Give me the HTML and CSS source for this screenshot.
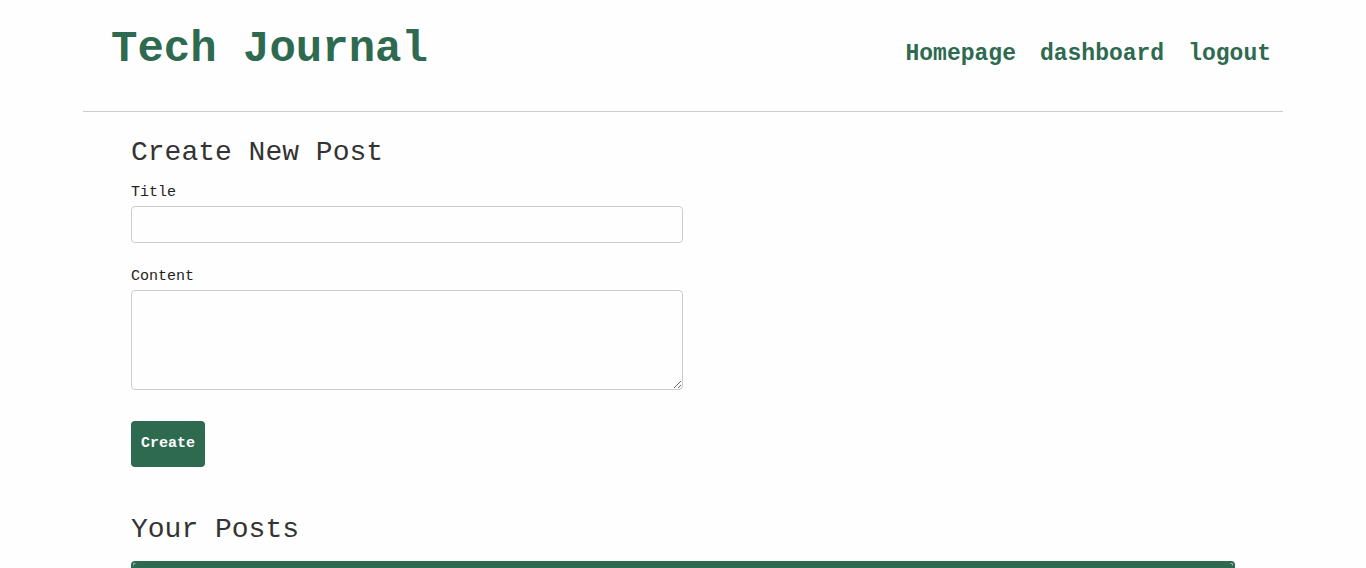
FILE: index.html
```html
<!DOCTYPE html>
<html lang="en">
<head>
  <meta charset="utf-8">
  <meta name="viewport" content="width=device-width, initial-scale=1">
  <title>Tech Journal</title>
  <link rel="stylesheet" href="styles.css">
</head>
<body>
  <div class="wrapper">
    <header class="site-header">
      <h1 class="brand">Tech Journal</h1>
      <nav class="site-nav">
        <a href="#">Homepage</a>
        <a href="#">dashboard</a>
        <a href="#">logout</a>
      </nav>
    </header>
    <main class="content">
      <h2 class="section-title">Create New Post</h2>
      <form class="post-form">
        <div class="field">
          <label for="post-title">Title</label>
          <input class="control" type="text" id="post-title" name="title">
        </div>
        <div class="field">
          <label for="post-content">Content</label>
          <textarea class="control control-area" id="post-content" name="content"></textarea>
        </div>
        <button class="create-button" type="submit">Create</button>
      </form>
      <h2 class="section-title">Your Posts</h2>
      <article class="post-card">
        <div class="post-card-header"></div>
      </article>
    </main>
  </div>
</body>
</html>
```
FILE: styles.css
```css
* {
  box-sizing: border-box;
}

body {
  margin: 0;
  height: 100vh;
  overflow: hidden;
  background: #fefefe;
  color: #333;
  font-family: "Liberation Mono", "Courier New", monospace;
  font-size: 15px;
}

.wrapper {
  max-width: 1200px;
  margin: 0 auto;
}

.site-header {
  display: flex;
  justify-content: space-between;
  align-items: flex-start;
  padding: 22px 12px 34px 28px;
  border-bottom: 1px solid #ccc;
  color: #2d6a4f;
}

.brand {
  margin: 0;
  font-size: 44px;
  line-height: 55px;
}

.site-nav {
  display: flex;
  gap: 24px;
  padding-top: 18px;
}

.site-nav a {
  color: #2d6a4f;
  font-size: 23px;
  font-weight: bold;
  line-height: 28px;
  text-decoration: none;
}

.content {
  padding: 21px 48px 0;
}

.section-title {
  margin: 0;
  font-size: 28px;
  font-weight: normal;
  line-height: 40px;
}

.post-form {
  width: 50%;
  padding-top: 8px;
  margin-bottom: 43px;
}

.field {
  margin-bottom: 24px;
}

.field label {
  display: block;
  padding-bottom: 1px;
  color: #222;
  line-height: 24px;
}

.field:first-child {
  margin-bottom: 22px;
}

.control {
  display: block;
  width: 100%;
  height: 37px;
  padding: 8px 12px;
  border: 1px solid #ccc;
  border-radius: 4px;
  background: #fefefe;
  font: inherit;
}

.control-area {
  height: 100px;
  resize: both;
}

.create-button {
  margin-top: 7px;
  padding: 12px 10px;
  border: 0;
  border-radius: 4px;
  background: #2d6a4f;
  color: #fefefe;
  font: bold 15px/22px "Liberation Mono", "Courier New", monospace;
}

.post-card {
  margin-top: 11px;
  border: 2px solid #2d6a4f;
  border-radius: 4px;
  background: #fefefe;
}

.post-card-header {
  min-height: 48px;
  border-radius: 4px;
  background: #2d6a4f;
}
```
